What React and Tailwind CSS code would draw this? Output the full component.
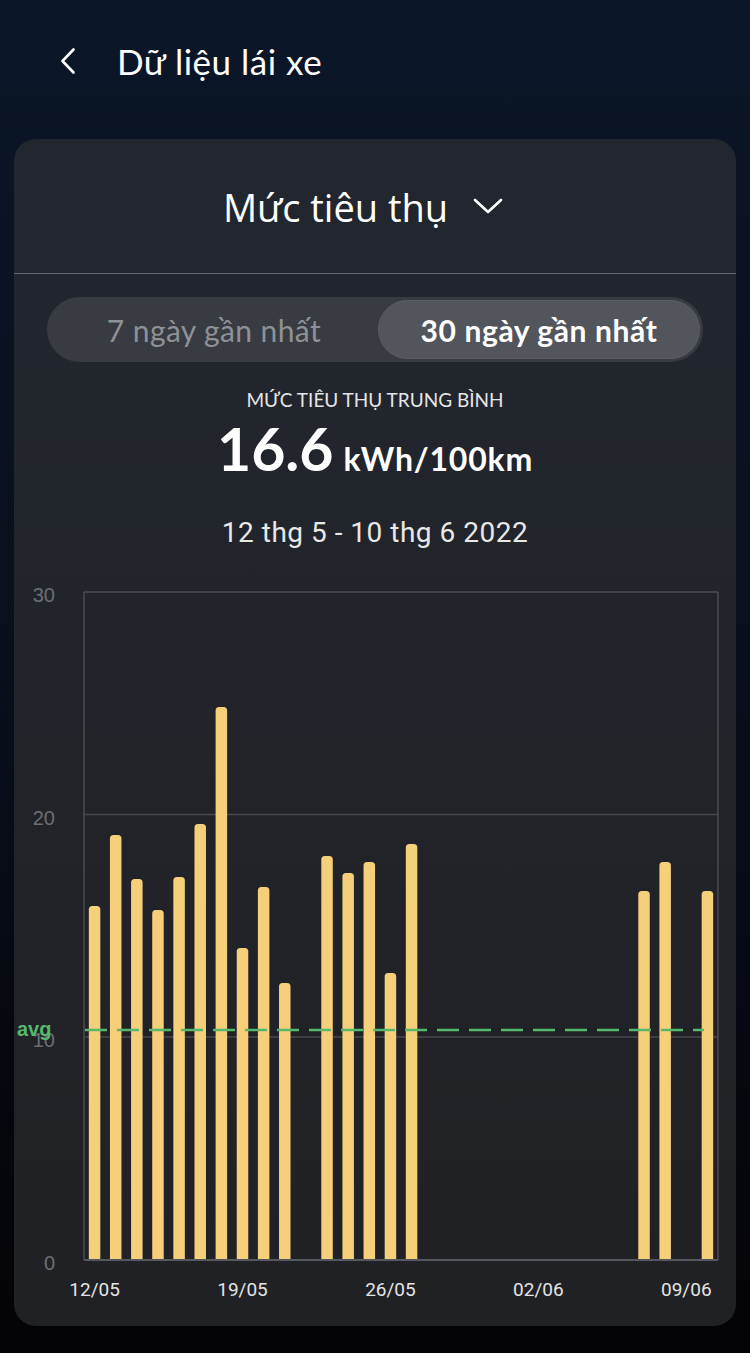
import React from "react";

const bars = [
  [0, 905], [1, 834], [2, 878], [3, 909], [4, 876], [5, 823], [6, 706], [7, 947],
  [8, 886], [9, 982], [11, 855], [12, 872], [13, 861], [14, 972], [15, 843],
  [26, 890], [27, 861], [29, 890],
];

const xLabels = [
  [0, "12/05"], [7, "19/05"], [14, "26/05"], [21, "02/06"], [28, "09/06"],
];

function Chart() {
  const left = 70, right = 704, top = 21, bottom = 689;
  const slot = (right - left) / 30;
  const cx = (i) => left + slot * (i + 0.5);
  const w = 11.5, r = 3.5;
  return (
    <svg width="722" height="740" viewBox="0 0 722 740" className="block">
      {/* grid */}
      <line x1={left} y1={243.5} x2={right} y2={243.5} stroke="#46494e" strokeWidth="1.5" />
      <line x1={left} y1={466} x2={right} y2={466} stroke="#46494e" strokeWidth="1.5" />
      <line x1={left} y1={top} x2={right} y2={top} stroke="#4a4d52" strokeWidth="1.5" />
      <line x1={left} y1={top} x2={left} y2={bottom} stroke="#4a4d52" strokeWidth="1.5" />
      <line x1={right} y1={top} x2={right} y2={bottom} stroke="#4a4d52" strokeWidth="1.5" />
      {/* y labels */}
      <g fill="#6c6e73" fontFamily="'Liberation Sans', Arial, sans-serif" fontSize="20" textAnchor="end">
        <text x="41" y="31">30</text>
        <text x="41" y="254">20</text>
        <text x="41" y="476">10</text>
        <text x="41" y="699">0</text>
      </g>
      {/* bars */}
      {bars.map(([i, t]) => {
        const x = cx(i) - w / 2;
        const y = t - 570;
        const d = `M${x},${bottom} V${y + r} Q${x},${y} ${x + r},${y} H${x + w - r} Q${x + w},${y} ${x + w},${y + r} V${bottom} Z`;
        return <path key={i} d={d} fill="#f6cf7b" />;
      })}
      {/* bottom axis */}
      <line x1={left} y1={bottom} x2={right} y2={bottom} stroke="#55585d" strokeWidth="2" />
      {/* avg line */}
      <line x1={71} y1={459} x2={690} y2={459} stroke="#55b86d" strokeWidth="2.5" strokeDasharray="22 10" />
      <text x="3" y="465" fill="#55b86d" fontFamily="'Liberation Sans', Arial, sans-serif" fontSize="20" fontWeight="700">avg</text>
      {/* x labels */}
      <g fill="#e4e4e4" fontFamily="Roboto, sans-serif" fontSize="19" textAnchor="middle">
        {xLabels.map(([i, s]) => (
          <text key={s} x={cx(i)} y="725">{s}</text>
        ))}
      </g>
    </svg>
  );
}

export default function App() {
  return (
    <div className="min-h-[1353px] w-[750px] bg-gradient-to-b from-[#0b1628] via-[#080f1c] to-[#040407] overflow-hidden">
      {/* header */}
      <div className="h-[122px] flex items-center pl-[58px]">
        <svg width="20" height="28" viewBox="0 0 20 28" className="block">
          <path d="M15.5 2.5 L4.5 14 L15.5 25.5" fill="none" stroke="#ffffff" strokeWidth="2.6" strokeLinecap="round" strokeLinejoin="round" />
        </svg>
        <div className="ml-[39px] text-white text-[35px] leading-none tracking-[0.5px] font-['Lato',sans-serif]">
          Dữ liệu lái xe
        </div>
      </div>

      {/* card */}
      <div className="mt-[17px] mx-[14px] rounded-[22px] bg-gradient-to-b from-[#22262f] to-[#202124] pb-[15px]">
        <div className="h-[134px] flex items-center justify-center pr-[24px]">
          <span className="text-white text-[38px] leading-none font-medium font-['Open_Sans',sans-serif] pt-[2px]">Mức tiêu thụ</span>
          <svg width="30" height="18" viewBox="0 0 30 18" className="ml-[25px] block">
            <path d="M2 3 L15 15 L28 3" fill="none" stroke="#ffffff" strokeWidth="2.6" strokeLinecap="round" strokeLinejoin="round" />
          </svg>
        </div>
        <div className="h-px bg-[#62666d]" />

        {/* toggle */}
        <div className="mt-[23px] mx-[33px] h-[65px] rounded-full bg-[#383b42] p-[3px] flex font-['Lato',sans-serif]">
          <div className="flex-1 flex items-center justify-center text-[30px] leading-none tracking-[0.4px] text-[#8e9196]">
            7 ngày gần nhất
          </div>
          <div className="w-[322px] rounded-full bg-[#52555c] border border-[#5b5e64] flex items-center justify-center text-[30px] leading-none tracking-[0.6px] font-bold text-white">
            30 ngày gần nhất
          </div>
        </div>

        {/* average */}
        <div className="mt-[28px] text-center text-[19px] leading-none text-[#e6e6e6] font-['Lato',sans-serif]">
          MỨC TIÊU THỤ TRUNG BÌNH
        </div>
        <div className="mt-[10px] flex items-baseline justify-center gap-[10px] text-white font-bold font-['Lato',sans-serif] leading-none">
          <span className="text-[59px] leading-none">16.6</span>
          <span className="text-[32px] leading-none tracking-[0.8px]">kWh/100km</span>
        </div>
        <div className="mt-[41px] text-center text-[28px] leading-none tracking-[0.5px] text-[#e8e8e8] font-['Roboto',sans-serif]">
          12 thg 5 - 10 thg 6 2022
        </div>

        <div className="mt-[24px]">
          <Chart />
        </div>
      </div>
    </div>
  );
}
